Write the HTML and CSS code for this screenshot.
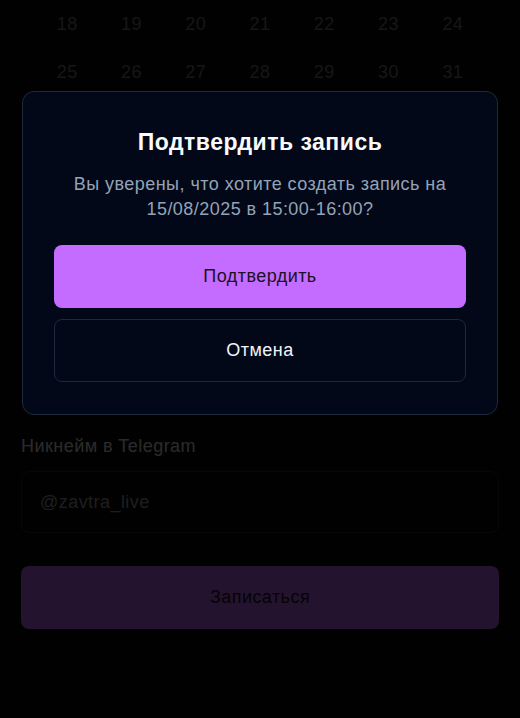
FILE: index.html
```html
<!DOCTYPE html>
<html lang="ru">
<head>
  <meta charset="UTF-8">
  <meta name="viewport" content="width=device-width, initial-scale=1.0">
  <title>Запись</title>
  <link rel="stylesheet" href="styles.css">
</head>
<body>
  <main class="page">
    <div class="calendar">
      <div class="week">
        <span>18</span><span>19</span><span>20</span><span>21</span><span>22</span><span>23</span><span>24</span>
      </div>
      <div class="week">
        <span>25</span><span>26</span><span>27</span><span>28</span><span>29</span><span>30</span><span>31</span>
      </div>
    </div>

    <div class="slots"></div>

    <label class="label" for="nick">Никнейм в Telegram</label>
    <input class="input" id="nick" type="text" placeholder="@zavtra_live">

    <button class="submit">Записаться</button>
  </main>

  <div class="overlay">
    <div class="dialog">
      <h2 class="dialog-title">Подтвердить запись</h2>
      <p class="dialog-text">Вы уверены, что хотите создать запись на 15/08/2025 в 15:00-16:00?</p>
      <div class="dialog-actions">
        <button class="btn btn-primary">Подтвердить</button>
        <button class="btn btn-outline">Отмена</button>
      </div>
    </div>
  </div>
</body>
</html>
```

FILE: styles.css
```css
* {
  box-sizing: border-box;
}

body {
  margin: 0;
  background-color: #060606;
  font-family: "Liberation Sans", Arial, sans-serif;
  font-size: 18px;
  letter-spacing: 0.45px;
  color: #fafafa;
  height: 718px;
  overflow: hidden;
}

.page {
  padding: 0 21px;
}

.calendar {
  padding: 0 14px;
}

.week {
  display: grid;
  grid-template-columns: repeat(7, 1fr);
  height: 48px;
  align-items: center;
  text-align: center;
  color: #7a7a7a;
}

.slots {
  height: 338px;
}

.label {
  display: block;
  line-height: 24px;
  color: #e8e8e8;
  margin-bottom: 13px;
}

.input {
  display: block;
  width: 100%;
  height: 62px;
  padding: 0 18px;
  font-family: inherit;
  font-size: 18px;
  letter-spacing: inherit;
  color: #fafafa;
  background-color: #060606;
  border: 1px solid #2a2a2a;
  border-radius: 8px;
  outline: none;
}

.input::placeholder {
  color: #a3a3a3;
}

.submit {
  display: block;
  width: 100%;
  height: 63px;
  margin-top: 33px;
  font-family: inherit;
  font-size: 18px;
  letter-spacing: inherit;
  color: #1c1224;
  background-color: #c46cff;
  border: none;
  border-radius: 8px;
}

/* modal */
.overlay {
  position: fixed;
  inset: 0;
  background-color: rgba(0, 0, 0, 0.82);
  padding: 91px 22px 0;
}

.dialog {
  background-color: #020817;
  border: 1px solid #1e293b;
  border-radius: 12px;
  padding: 36px 31px 32px;
  text-align: center;
}

.dialog-title {
  margin: 0;
  font-size: 23px;
  line-height: 28px;
  letter-spacing: 0.5px;
  font-weight: bold;
  color: #f8fafc;
}

.dialog-text {
  margin: 16px 0 0;
  line-height: 25px;
  color: #94a3b8;
}

.dialog-actions {
  display: flex;
  flex-direction: column;
  gap: 11px;
  margin-top: 23px;
}

.btn {
  height: 63px;
  font-family: inherit;
  font-size: 18px;
  letter-spacing: inherit;
  border-radius: 8px;
  cursor: pointer;
}

.btn-primary {
  background-color: #c46cff;
  color: #1a1024;
  border: none;
}

.btn-outline {
  background-color: #020817;
  color: #f1f5f9;
  border: 1px solid #1e293b;
}
```
